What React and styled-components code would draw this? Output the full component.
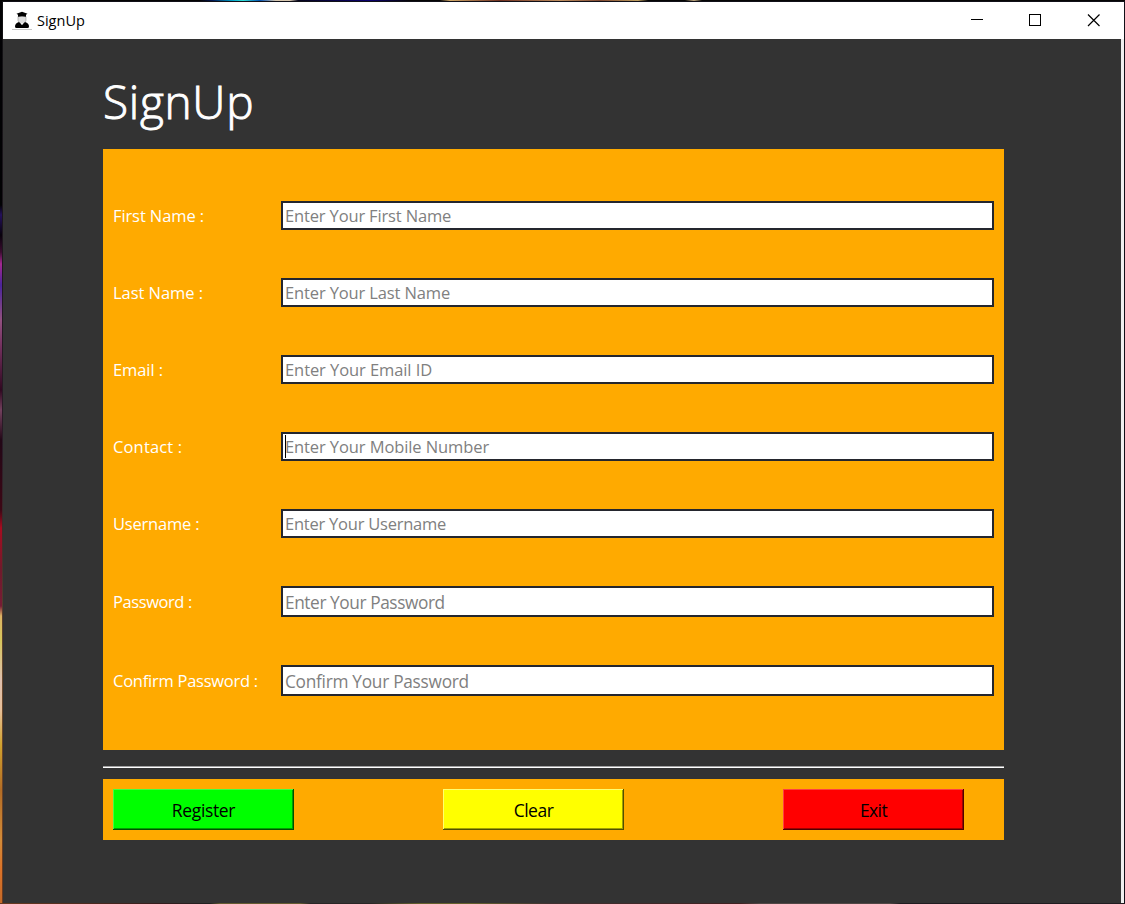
import React from 'react';
import styled, { createGlobalStyle } from 'styled-components';

const GlobalStyle = createGlobalStyle`
  * { box-sizing: border-box; }
  body { margin: 0; font-family: "Open Sans", "Noto Sans", sans-serif; overflow: hidden; }
`;

const Desktop = styled.div`
  width: 1125px;
  height: 904px;
  padding: 2px 1px 1px 3px;
  background:
    linear-gradient(90deg, #030303 0 200px, #001450 212px, #00a0c8 232px, #30e0d8 243px, #0050b0 260px, #d8c8b0 276px 290px, #05051c 298px, #0a0070 370px, #050505 410px 440px, #d0a868 450px, #703020 500px, #c09060 560px, #804830 600px, #c0a060 638px, #050505 648px 685px, #c0a880 694px, #050505 702px) 0 0 / 1125px 1px no-repeat,
    linear-gradient(90deg, #6a3a20, #351c1c 160px, #202020 210px, #655b30 220px 300px, #292525 310px 370px, #65602c 420px 470px, #403030 550px, #402020 740px, #514644 760px 890px, #201c20 900px) 0 903px / 1125px 1px no-repeat,
    linear-gradient(180deg, #020204 0 205px, #24105c 215px, #08020c 235px, #3b0c30 252px, #a22890 264px, #4a249a 285px, #925080 320px, #753260 345px, #300820 390px, #72405d 410px, #220716 440px, #3d0715 510px, #a70c20 528px, #701a2c 570px, #761c35 606px, #ddb465 616px, #d7c65b 640px, #dfc0ae 680px, #e7bf98 710px, #d1a32e 745px, #b36d25 790px, #d28b38 840px, #dc7328 870px, #c36a28) 0 0 / 2px 904px no-repeat,
    linear-gradient(180deg, #101012, #2a1c28 50%, #6a4a30 75%, #6a3a20) 2px 0 / 1px 904px no-repeat,
    #111018;
`;

const Window = styled.main`
  height: 901px;
  display: flex;
  flex-direction: column;
  background: #fff;
`;

const TitleBar = styled.header`
  height: 37px;
  flex: none;
  display: flex;
  align-items: center;
  padding-left: 9px;
  background: #fff;
`;

const WindowName = styled.span`
  margin-left: 5px;
  flex: 1;
  font-size: 14.5px;
  line-height: 20px;
  letter-spacing: 0;
  color: #000;
`;

const Controls = styled.div`
  display: flex;
  margin-right: 1px;
`;

const Control = styled.svg`
  width: 58.5px;
  height: 37px;
  fill: none;
  stroke: #000;
`;

const Content = styled.section`
  flex: 1;
  margin-right: 3px;
  box-shadow: 3px 0 #f0f0f0;
  padding: 29px 117px 0 100px;
  background: #333;
`;

const Heading = styled.h1`
  height: 81px;
  margin: 0;
  font-size: 46px;
  font-weight: 300;
  line-height: 66px;
  letter-spacing: ${p => p.$track}px;
  color: #fff;
  -webkit-text-stroke: 0.9px #fff;
`;

const Form = styled.form`
  height: 601px;
  padding: 52px 10px 0;
  display: flex;
  flex-direction: column;
  gap: 48px;
  background: #fa0;
`;

const Field = styled.div`
  display: grid;
  grid-template-columns: 168px 1fr;
  align-items: center;
`;

const Label = styled.label`
  font-size: 16.5px;
  line-height: 24px;
  letter-spacing: ${p => p.$track}px;
  white-space: nowrap;
  color: #fff;
`;

const Entry = styled.div`
  height: ${p => (p.$tall ? 31 : 29)}px;
  display: flex;
  align-items: center;
  padding: ${p => (p.$tall ? 2 : 0)}px 0 0 2px;
  border: 2px solid #24262e;
  background: #fff;
  color: #808080;
  font-size: ${p => (p.$tall ? 17.3 : 16.5)}px;
  line-height: 24px;
  letter-spacing: ${p => p.$track}px;
  white-space: nowrap;
`;

const Caret = styled.i`
  width: 1px;
  height: 23px;
  margin-right: -1px;
  background: #000;
`;

const Rule = styled.hr`
  height: 2px;
  margin: 16px 0 11px;
  border: 0;
  border-top: 1px solid #a0a0a0;
  background: #fff;
`;

const Actions = styled.footer`
  height: 61px;
  display: flex;
  padding: 10px;
  background: #fa0;
`;

const Button = styled.button`
  width: 181px;
  height: 41px;
  margin-right: ${p => p.$gap || 0}px;
  padding: 1px 0 0;
  border: 0;
  background: ${p => p.$face};
  box-shadow: inset -1px -1px ${p => p.$dark}, inset 1px 1px ${p => p.$light}, inset -2px -2px ${p => p.$shade};
  color: #000;
  font: 400 17.5px/24px "Open Sans", sans-serif;
  letter-spacing: ${p => p.$track}px;
`;

const GraduateIcon = () => (
  <svg width="20" height="20" viewBox="0 0 20 20">
    <path d="M0 18.5h20" stroke="#c8c8c8" />
    <path d="M6 5.5v4q1 3.5 4 4 3-.5 4-4v-4z" fill="#ddd" stroke="#999" strokeWidth=".6" />
    <path d="M4.5 2.8l5.500-2 5.500 2-1.500 1v2q-4-1-8 0v-2z" fill="#000" />
    <path d="M3 15.5q0-3.500 4-4.500l3 3 3-3q4 1 4 4.500 0 1.500-1.500 1.500h-11Q3 17 3 15.500z" fill="#000" />
    <path d="M9 12l1 2 1-2z" fill="#fff" />
  </svg>
);

const fields = [
  { label: 'First Name :', hint: 'Enter Your First Name', lt: -0.1, ht: -0.15 },
  { label: 'Last Name :', hint: 'Enter Your Last Name', lt: -0.05, ht: -0.13 },
  { label: 'Email :', hint: 'Enter Your Email ID', lt: -0.1, ht: -0.08 },
  { label: 'Contact :', hint: 'Enter Your Mobile Number', lt: 0.15, ht: -0.1, caret: true },
  { label: 'Username :', hint: 'Enter Your Username', lt: -0.2, ht: -0.23 },
  { label: 'Password :', hint: 'Enter Your Password', lt: -0.42, ht: -0.42, tall: true },
  { label: 'Confirm Password :', hint: 'Confirm Your Password', lt: -0.25, ht: -0.28, tall: true },
];

export default function App() {
  return (
    <Desktop>
      <GlobalStyle />
      <Window>
        <TitleBar>
          <GraduateIcon />
          <WindowName>SignUp</WindowName>
          <Controls>
            <Control viewBox="0 0 58.5 37"><path d="M23 17.5h12" /></Control>
            <Control viewBox="0 0 58.5 37"><rect x="23.5" y="12.5" width="11" height="11" /></Control>
            <Control viewBox="0 0 58.5 37"><path d="M23 12.500l11.500 11.500M34.500 12.500L23 24" strokeWidth="1.2" /></Control>
          </Controls>
        </TitleBar>
        <Content>
          <Heading $track={0.7}>SignUp</Heading>
          <Form>
            {fields.map(f => (
              <Field key={f.label}>
                <Label $track={f.lt}>{f.label}</Label>
                <Entry $tall={f.tall} $track={f.ht}>{f.caret && <Caret />}{f.hint}</Entry>
              </Field>
            ))}
          </Form>
          <Rule />
          <Actions>
            <Button $gap={149} $face="#0f0" $light="#40ff40" $shade="#00a000" $dark="#005000" $track={-0.35}>Register</Button>
            <Button $gap={159} $face="#ff0" $light="#ffff70" $shade="#a0a000" $dark="#505000" $track={-0.5}>Clear</Button>
            <Button $face="#f00" $light="#ff4040" $shade="#a00000" $dark="#500000" $track={-0.6}>Exit</Button>
          </Actions>
        </Content>
      </Window>
    </Desktop>
  );
}
